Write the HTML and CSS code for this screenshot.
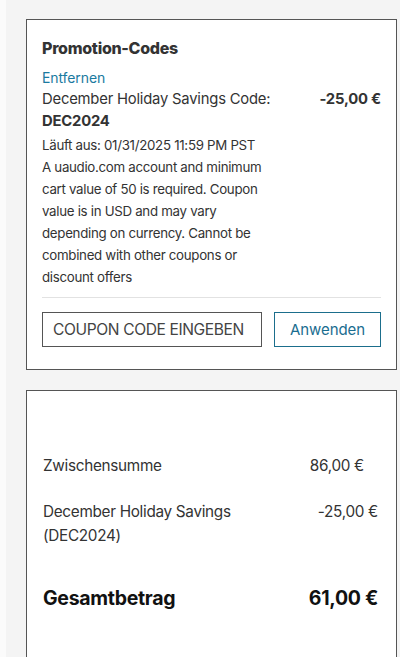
FILE: index.html
```html
<!DOCTYPE html>
<html lang="de">
<head>
<meta charset="utf-8">
<link rel="stylesheet" href="styles.css">
</head>
<body>
<div class="page">
  <section class="card promo">
    <h2 class="promo-title">Promotion-Codes</h2>
    <a class="remove" href="#">Entfernen</a>
    <div class="promo-row">
      <div class="promo-name">December Holiday Savings Code: <b>DEC2024</b></div>
      <div class="promo-amount">-25,00 €</div>
    </div>
    <p class="expires">Läuft aus: 01/31/2025 11:59 PM PST</p>
    <p class="terms">A uaudio.com account and minimum cart value of 50 is required. Coupon value is in USD and may vary depending on currency. Cannot be combined with other coupons or discount offers</p>
    <div class="coupon-form">
      <div class="coupon-input">COUPON CODE EINGEBEN</div>
      <button class="apply">Anwenden</button>
    </div>
  </section>
  <section class="card summary">
    <div class="sum-row">
      <span>Zwischensumme</span>
      <span class="val sub">86,00 €</span>
    </div>
    <div class="sum-row">
      <span class="disc-label">December Holiday Savings (DEC2024)</span>
      <span class="val">-25,00 €</span>
    </div>
    <div class="sum-row total">
      <span>Gesamtbetrag</span>
      <span class="val">61,00 €</span>
    </div>
  </section>
</div>
</body>
</html>
```
FILE: styles.css
```css
* { box-sizing: border-box; }
html, body { margin: 0; padding: 0; background: #fbfbfb; }
body {
  font-family: Inter, "Liberation Sans", Arial, sans-serif;
  color: #333;
  height: 657px;
  overflow: hidden;
}
.page {
  margin-left: 6px;
  background: #f4f4f4;
  padding: 19px 3px 0 20px;
  height: 657px;
  overflow: hidden;
  display: flex;
  flex-direction: column;
  gap: 20px;
}
.card {
  background: #fff;
  border: 1px solid #555;
}
.promo {
  padding: 18px 15px 22px 15px;
  flex: none;
}
.promo-title {
  margin: 0;
  font-size: 16px;
  font-weight: 800;
  letter-spacing: -0.3px;
  color: #333;
  line-height: 20px;
}
.remove {
  display: block;
  margin-top: 10px;
  font-size: 14px;
  line-height: 20px;
  color: #1a7aa0;
  text-decoration: none;
  letter-spacing: -0.1px;
}
.promo-row {
  display: flex;
  justify-content: space-between;
  align-items: flex-start;
  gap: 10px;
  font-size: 14.8px;
  line-height: 22px;
  letter-spacing: -0.2px;
}
.promo-name { width: 250px; }
.promo-name b { font-weight: 700; }
.promo-amount { font-weight: 700; white-space: nowrap; }
.expires {
  margin: 2px 0 0;
  font-size: 13.3px;
  line-height: 22px;
  letter-spacing: -0.3px;
}
.terms {
  margin: 0;
  font-size: 13.3px;
  line-height: 22px;
  letter-spacing: -0.3px;
  width: 240px;
  padding-bottom: 9px;
  position: relative;
}
.terms::after {
  content: "";
  position: absolute;
  left: 0;
  bottom: -1px;
  width: 339px;
  border-bottom: 1px solid #e2e2e2;
}
.coupon-form {
  display: flex;
  justify-content: space-between;
  margin-top: 15px;
}
.coupon-input {
  width: 220px;
  height: 35px;
  border: 1px solid #555;
  font-size: 15.6px;
  line-height: 33px;
  padding-left: 10px;
  color: #444;
  letter-spacing: -0.4px;
}
.apply {
  width: 107px;
  height: 35px;
  border: 1px solid #1b6e8c;
  background: #fff;
  color: #1a6d90;
  font-family: inherit;
  font-size: 15px;
  letter-spacing: -0.1px;
}
.summary {
  padding: 63px 18px 60px 16px;
  flex: 1;
  border-bottom: none;
}
.sum-row {
  display: flex;
  justify-content: space-between;
  align-items: flex-start;
  font-size: 15.3px;
  line-height: 24px;
  letter-spacing: -0.3px;
  color: #333;
  margin-bottom: 22px;
}
.sum-row .sub { padding-right: 14px; }
.disc-label { width: 210px; }
.sum-row.total {
  margin-top: 38px;
  font-size: 19.5px;
  font-weight: 700;
  color: #111;
}
```
